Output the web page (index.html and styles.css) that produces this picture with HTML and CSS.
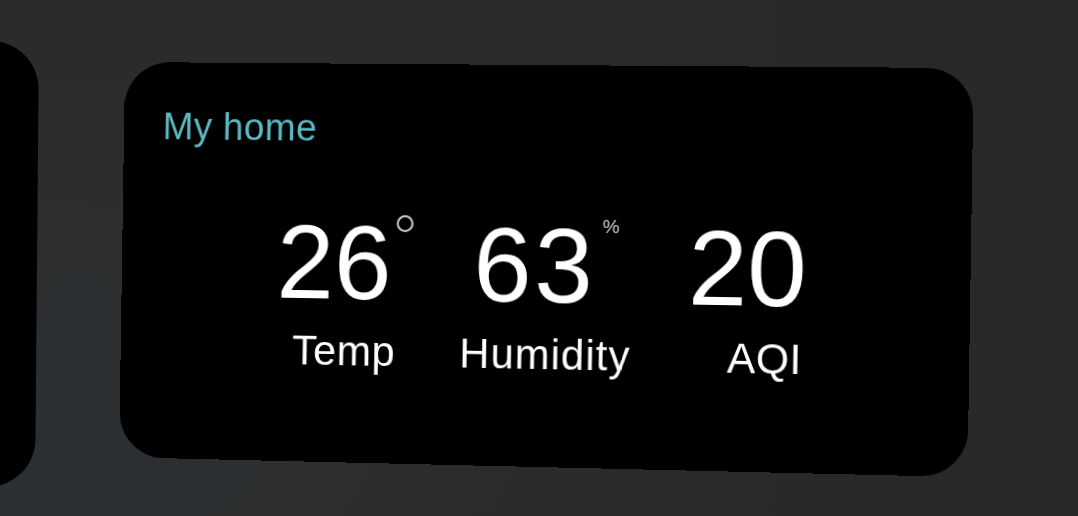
FILE: index.html
```html
<!DOCTYPE html>
<html>
<head>
<meta charset="utf-8">
<link rel="stylesheet" href="styles.css">
</head>
<body>
  <div class="side-card"></div>
  <div class="card">
    <div class="title">My home</div>
    <div class="stats">
      <div class="stat">
        <div class="value"><span class="num">26</span><span class="deg"></span></div>
        <div class="label">Temp</div>
      </div>
      <div class="stat stat-mid">
        <div class="value"><span class="num num-wide">63</span><span class="unit">%</span></div>
        <div class="label label-wide">Humidity</div>
      </div>
      <div class="stat">
        <div class="value"><span class="num">20</span><span class="spacer"></span></div>
        <div class="label">AQI</div>
      </div>
    </div>
  </div>
</body>
</html>
```

FILE: styles.css
```css
html, body {
  margin: 0;
  padding: 0;
}
body {
  width: 1078px;
  height: 516px;
  overflow: hidden;
  display: flex;
  align-items: flex-start;
  font-family: "Liberation Sans", Arial, sans-serif;
  background:
    radial-gradient(ellipse 600px 400px at 60px 420px, #2c3033 0%, rgba(44,48,51,0) 100%),
    linear-gradient(90deg, #2c2b2b 0%, #2a2a2a 60%, #282828 100%);
}
.side-card {
  flex: none;
  width: 300px;
  height: 446px;
  margin-left: -263px;
  margin-top: 40px;
  background: #000;
  border-radius: 48px;
  transform: rotate(0.5deg);
}
.card {
  flex: none;
  box-sizing: border-box;
  width: 850px;
  height: 402px;
  margin-left: 77px;
  margin-top: 65px;
  padding: 46px 0 0 40px;
  background: #000;
  border-radius: 46px;
  transform: perspective(1500px) rotateZ(0.88deg) rotateY(-3.5deg);
}
.title {
  color: #5cb9c2;
  font-size: 38px;
  letter-spacing: 0.3px;
  line-height: 1;
}
.stats {
  display: flex;
  justify-content: center;
  margin-top: 64px;
  padding-left: 36px;
  margin-left: -40px;
}
.stat {
  display: flex;
  flex-direction: column;
  align-items: center;
}
.stat-mid {
  margin: 0 56px 0 48px;
}
.value {
  display: flex;
  align-items: flex-start;
  color: #fff;
}
.num {
  font-size: 105px;
  line-height: 1;
}
.num-wide {
  letter-spacing: 3px;
}
.deg {
  width: 13px;
  height: 13px;
  border: 2px solid #cfcfcf;
  border-radius: 50%;
  margin-left: 5px;
  margin-top: 4px;
}
.unit {
  color: #d0d0d0;
  font-size: 19px;
  line-height: 1;
  margin-left: 6px;
  margin-top: 3px;
}
.spacer {
  width: 36px;
}
.label {
  color: #fff;
  font-size: 42px;
  letter-spacing: 0.5px;
  line-height: 1;
  margin-top: 16px;
}
.label-wide {
  letter-spacing: 1px;
}
```
